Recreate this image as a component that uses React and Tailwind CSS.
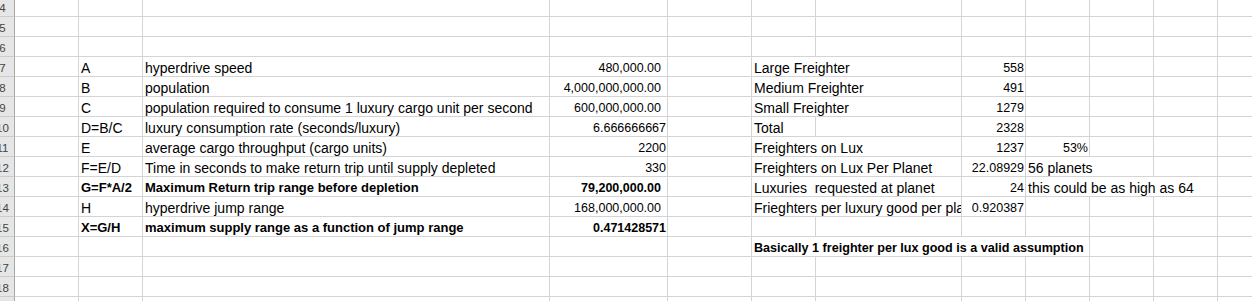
import React from "react";

const W = {
  A: "w-[64px]",
  B: "w-[64px]",
  C: "w-[407px]",
  D: "w-[118px]",
  E: "w-[84px]",
  F: "w-[64px]",
  G: "w-[146px]",
  H: "w-[64px]",
  I: "w-[64px]",
  J: "w-[64px]",
  K: "w-[64px]",
  L: "w-[64px]",
};
const ORDER = ["A", "B", "C", "D", "E", "F", "G", "H", "I", "J", "K", "L"];
const SPAN_W = {
  FG: "w-[210px]",
  FGHI: "w-[338px]",
  IJ: "w-[128px]",
  IJK: "w-[192px]",
};

const ROWS = [
  { n: 4, cells: {} },
  { n: 5, cells: {} },
  { n: 6, cells: {} },
  {
    n: 7,
    cells: {
      B: { t: "A" },
      C: { t: "hyperdrive speed" },
      D: { t: "480,000.00", k: "acc" },
      F: { t: "Large Freighter", span: "FG" },
      H: { t: "558", k: "num" },
    },
  },
  {
    n: 8,
    cells: {
      B: { t: "B" },
      C: { t: "population" },
      D: { t: "4,000,000,000.00", k: "acc" },
      F: { t: "Medium Freighter", span: "FG" },
      H: { t: "491", k: "num" },
    },
  },
  {
    n: 9,
    cells: {
      B: { t: "C" },
      C: { t: "population required to consume 1 luxury cargo unit per second" },
      D: { t: "600,000,000.00", k: "acc" },
      F: { t: "Small Freighter", span: "FG" },
      H: { t: "1279", k: "num" },
    },
  },
  {
    n: 10,
    cells: {
      B: { t: "D=B/C" },
      C: { t: "luxury consumption rate (seconds/luxury)" },
      D: { t: "6.666666667", k: "num" },
      F: { t: "Total" },
      H: { t: "2328", k: "num" },
    },
  },
  {
    n: 11,
    cells: {
      B: { t: "E" },
      C: { t: "average cargo throughput (cargo units)" },
      D: { t: "2200", k: "num" },
      F: { t: "Freighters on Lux", span: "FG" },
      H: { t: "1237", k: "num" },
      I: { t: "53%", k: "num" },
    },
  },
  {
    n: 12,
    cells: {
      B: { t: "F=E/D" },
      C: { t: "Time in seconds to make return trip until supply depleted" },
      D: { t: "330", k: "num" },
      F: { t: "Freighters on Lux Per Planet", span: "FG" },
      H: { t: "22.08929", k: "num" },
      I: { t: "56 planets", span: "IJ" },
    },
  },
  {
    n: 13,
    cells: {
      B: { t: "G=F*A/2", b: true },
      C: { t: "Maximum Return trip range before depletion", b: true },
      D: { t: "79,200,000.00", k: "acc", b: true },
      F: { t: "Luxuries  requested at planet", span: "FG" },
      H: { t: "24", k: "num" },
      I: { t: "this could be as high as 64", span: "IJK" },
    },
  },
  {
    n: 14,
    cells: {
      B: { t: "H" },
      C: { t: "hyperdrive jump range" },
      D: { t: "168,000,000.00", k: "acc" },
      F: { t: "Frieghters per luxury good per pla", span: "FG" },
      H: { t: "0.920387", k: "num" },
    },
  },
  {
    n: 15,
    cells: {
      B: { t: "X=G/H", b: true },
      C: { t: "maximum supply range as a function of jump range", b: true },
      D: { t: "0.471428571", k: "num", b: true },
    },
  },
  {
    n: 16,
    cells: {
      F: {
        t: "Basically 1 freighter per lux good is a valid assumption",
        span: "FGHI",
        k: "small",
      },
    },
  },
  { n: 17, cells: {} },
  { n: 18, cells: {} },
  { n: 19, cells: {} },
];

const BASE =
  "shrink-0 h-full border-r border-b border-[#d4d4d4] flex items-end overflow-hidden whitespace-pre leading-[16px] text-black";

function cellClass(c) {
  if (!c || !c.t) return "";
  if (c.k === "acc")
    return "justify-end pr-[6px] text-[12.5px]" + (c.b ? " font-bold" : "");
  if (c.k === "num")
    return "justify-end pr-[1px] text-[12.5px]" + (c.b ? " font-bold" : "");
  if (c.k === "small") return "pl-[2px] text-[12.6px] font-bold";
  if (c.b) return "pl-[2px] text-[13px] font-bold";
  return "pl-[2px] text-[14px]";
}

function Row({ row }) {
  const out = [];
  let i = 0;
  while (i < ORDER.length) {
    const col = ORDER[i];
    const c = row.cells[col];
    let w = W[col];
    let skip = 1;
    if (c && c.span) {
      w = SPAN_W[c.span];
      skip = c.span.length;
    }
    out.push(
      <div key={col} className={`${BASE} ${w} ${cellClass(c)}`}>
        {c && c.t ? <span>{c.t}</span> : null}
      </div>
    );
    i += skip;
  }
  return (
    <div className="flex h-[20px] shrink-0">
      <div className="shrink-0 w-[24px] h-full bg-[#e6e6e6] border-r border-r-[#a6a6a6] border-b border-b-[#cbcbcb] flex items-end justify-center text-[11.5px] leading-[15px] text-[#444]">
        <span>{row.n}</span>
      </div>
      {out}
    </div>
  );
}

export default function App() {
  return (
    <div className="w-[1252px] h-[301px] overflow-hidden bg-white font-['Liberation_Sans',Arial,sans-serif]">
      <div className="flex flex-col -mt-[3px] -ml-[9px]">
        {ROWS.map((r) => (
          <Row key={r.n} row={r} />
        ))}
      </div>
    </div>
  );
}
